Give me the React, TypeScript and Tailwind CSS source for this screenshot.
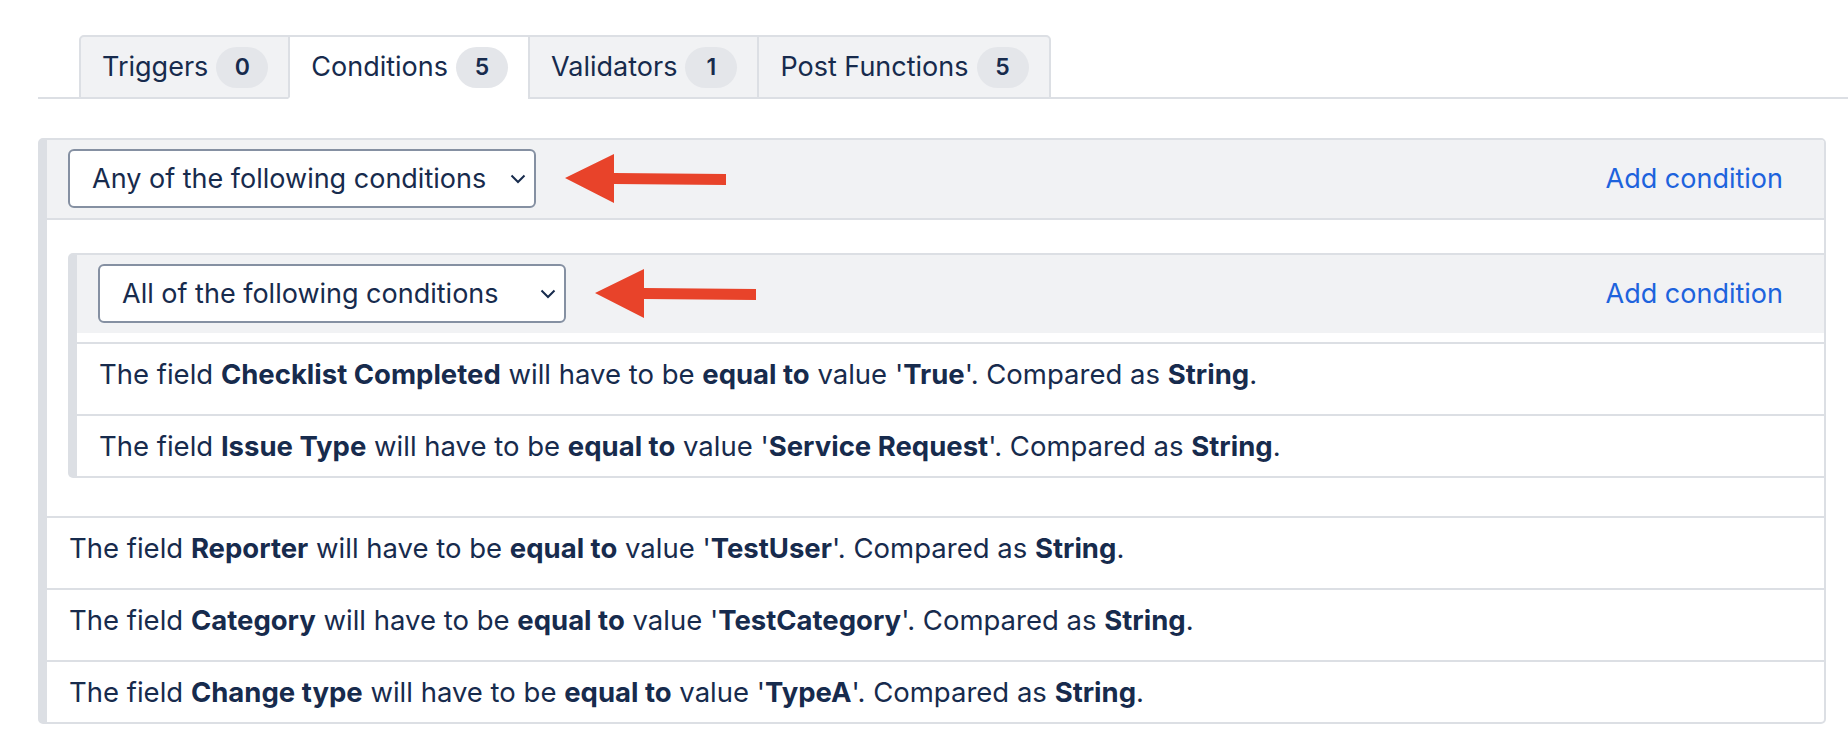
import React from "react";

const tabs = [
  { label: "Triggers", count: 0 },
  { label: "Conditions", count: 5, active: true },
  { label: "Validators", count: 1 },
  { label: "Post Functions", count: 5 },
];

function Arrow() {
  return (
    <svg width="162" height="50" viewBox="0 0 162 50" className="shrink-0">
      <polygon
        points="0,24 49,0 49,19 161,20 161,31 49,30 49,49"
        fill="#e8432a"
      />
    </svg>
  );
}

function Chevron() {
  return (
    <svg width="16" height="10" viewBox="0 0 16 10" className="shrink-0">
      <path d="M1.5 1.5 L8 8 L14.5 1.5" fill="none" stroke="#172b4d" strokeWidth="2" />
    </svg>
  );
}

function Select({ label }: { label: string }) {
  return (
    <div className="flex h-[59px] w-[468px] shrink-0 items-center justify-between rounded-[6px] border-2 border-[#8590a2] bg-white pl-[22px] pr-[8px]">
      <span>{label}</span>
      <Chevron />
    </div>
  );
}

function Header({ label }: { label: string }) {
  return (
    <div className="flex items-center bg-[#f1f2f4] pb-[10px] pl-[21px] pr-[41px] pt-[9px]">
      <Select label={label} />
      <div className="ml-[29px]">
        <Arrow />
      </div>
      <a className="ml-auto text-[#1d63dd]">Add condition</a>
    </div>
  );
}

function Rule({
  field,
  value,
  last,
}: {
  field: string;
  value: string;
  last?: boolean;
}) {
  return (
    <div
      className={
        "border-t-2 border-[#dcdfe4] pl-[22px] pt-[14px] text-[27.5px] " +
        (last ? "pb-[14px]" : "pb-[24px]")
      }
    >
      The field <b className="font-bold">{field}</b> will have to be{" "}
      <b className="font-bold">equal to</b> value '<b className="font-bold">{value}</b>'.
      Compared as <b className="font-bold">String</b>.
    </div>
  );
}

export default function App() {
  return (
    <div
      className="min-h-screen bg-white pl-[38px] pt-[35px] text-[27px] leading-[32px] text-[#172b4d]"
      style={{ fontFamily: "Inter, 'Noto Sans', sans-serif" }}
    >
      {/* Tabs */}
      <div className="flex border-b-2 border-[#dcdfe4] pl-[41px]">
        {tabs.map((t, i) => (
          <div
            key={t.label}
            className={
              "-mb-[2px] flex h-[64px] items-center gap-[8px] border-2 border-[#dcdfe4] pl-[21px] pr-[20px] " +
              (i > 0 ? "-ml-[2px] " : "") +
              (i === 0 ? "rounded-tl-[5px] " : "") +
              (i === tabs.length - 1 ? "rounded-tr-[5px] " : "") +
              (t.active ? "border-b-white bg-white" : "bg-[#f1f2f4]")
            }
          >
            <span>{t.label}</span>
            <span className="flex h-[41px] w-[52px] items-center justify-center rounded-full bg-[#e4e6ea] text-[23px] font-semibold">
              {t.count}
            </span>
          </div>
        ))}
      </div>

      {/* Outer condition group */}
      <div className="mr-[22px] mt-[39px] overflow-hidden rounded-[5px] border-2 border-l-[9px] border-[#dcdfe4]">
        <div className="border-b-2 border-[#dcdfe4]">
          <Header label="Any of the following conditions" />
        </div>

        <div className="pb-[38px] pl-[21px] pt-[33px]">
          <div className="overflow-hidden rounded-l-[5px] border-y-2 border-l-[9px] border-[#dcdfe4]">
            <Header label="All of the following conditions" />
            <div className="h-[9px]" />
            <Rule field="Checklist Completed" value="True" />
            <Rule field="Issue Type" value="Service Request" last />
          </div>
        </div>

        <Rule field="Reporter" value="TestUser" />
        <Rule field="Category" value="TestCategory" />
        <Rule field="Change type" value="TypeA" last />
      </div>
    </div>
  );
}
